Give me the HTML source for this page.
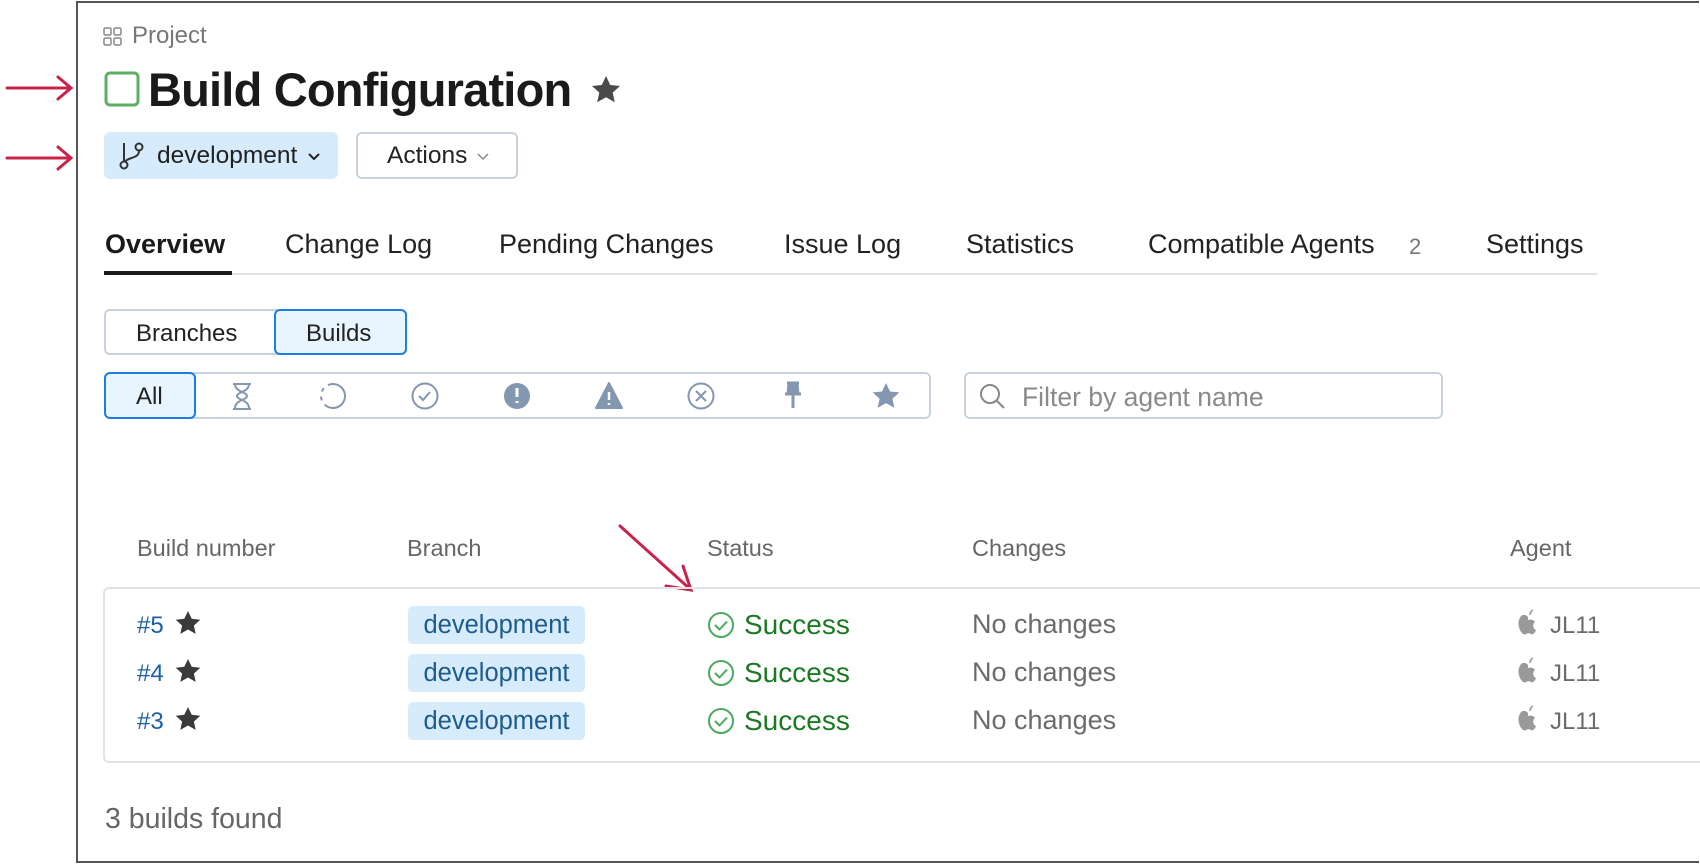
<!DOCTYPE html>
<html><head><meta charset="utf-8"><style>
*{margin:0;padding:0;box-sizing:border-box}
body{width:1700px;height:864px;background:#fff;font-family:"Liberation Sans",sans-serif;position:relative;overflow:hidden;color:#222}
.a{position:absolute;white-space:nowrap}
.frame{position:absolute;left:76px;top:1px;width:1623px;height:862px;border:2px solid #555;border-right:none}
.tab{position:absolute;top:229px;font-size:27px;color:#222}
.hd{position:absolute;top:535px;font-size:23.5px;color:#666}
.pill{position:absolute;left:408px;width:177px;height:38px;background:#d6ecfc;border-radius:5px;color:#1d5a8e;font-size:25.5px;text-align:center;line-height:38px}
.num{position:absolute;left:137px;font-size:24px;color:#1a5fa8}
.st{position:absolute;left:744px;font-size:28px;color:#1a7a23}
.nc{position:absolute;left:972px;font-size:27px;color:#6b6b6b}
.ag{position:absolute;left:1550px;font-size:24px;color:#6b6b6b}
</style></head><body>
<div class="frame"></div>
<svg style="position:absolute;left:0;top:0" width="1700" height="864">
<g stroke="#c8234a" stroke-width="3" fill="none" stroke-linecap="round">
<path d="M7 88H70M58 77L71 88L58 99"/>
<path d="M7 158H70M58 147L71 158L58 169"/>
<path d="M620 526L690 589M666 586L691 590L683 566"/>
</g>
<g fill="none" stroke="#888" stroke-width="1.5"><rect x="104" y="28" width="7" height="7" rx="1.5"/><rect x="114" y="28" width="7" height="7" rx="1.5"/><rect x="104" y="38" width="7" height="7" rx="1.5"/><rect x="114" y="38" width="7" height="7" rx="1.5"/></g>
<rect x="106" y="73" width="32" height="32" rx="4" fill="none" stroke="#5cae63" stroke-width="3"/>
<path d="M606 76l4.2 9 9.8 1-7.3 6.6 2.1 9.6-8.8-5-8.8 5 2.1-9.6-7.3-6.6 9.8-1z" fill="#4a4a4a"/>
</svg>
<div class="a" style="left:132px;top:22px;font-size:24px;color:#777">Project</div>
<div class="a" style="left:148px;top:62px;font-size:47px;font-weight:bold;color:#1a1a1a;letter-spacing:-0.8px">Build Configuration</div>
<div class="a" style="left:104px;top:132px;width:234px;height:47px;background:#d6ecfc;border-radius:6px"></div>
<svg class="a" style="left:118px;top:141px" width="30" height="30" viewBox="0 0 30 30" fill="none" stroke="#333" stroke-width="2"><circle cx="6" cy="24" r="3.5"/><circle cx="21" cy="6" r="3.5"/><path d="M6 20V2M21 10c0 8-12 6-14 11"/></svg>
<div class="a" style="left:157px;top:142px;font-size:24.5px;color:#222">development</div>
<svg class="a" style="left:307px;top:152px" width="14" height="10"><path d="M2 2l5 5 5-5" stroke="#222" stroke-width="2" fill="none"/></svg>
<div class="a" style="left:356px;top:132px;width:162px;height:47px;border:2px solid #c8d2de;border-radius:6px"></div>
<div class="a" style="left:387px;top:142px;font-size:24.5px;color:#222">Actions</div>
<svg class="a" style="left:476px;top:152px" width="14" height="10"><path d="M2 2l5 5 5-5" stroke="#888" stroke-width="1.5" fill="none"/></svg>
<div class="tab" style="left:105px;font-weight:bold;color:#1a1a1a">Overview</div>
<div class="tab" style="left:285px">Change Log</div>
<div class="tab" style="left:499px">Pending Changes</div>
<div class="tab" style="left:784px">Issue Log</div>
<div class="tab" style="left:966px">Statistics</div>
<div class="tab" style="left:1148px">Compatible Agents</div>
<div class="tab" style="left:1409px;font-size:22px;color:#777;top:234px">2</div>
<div class="tab" style="left:1486px">Settings</div>
<div class="a" style="left:104px;top:273px;width:1493px;height:2px;background:#dfe3e8"></div>
<div class="a" style="left:104px;top:271px;width:128px;height:4px;background:#1a1a1a"></div>
<div class="a" style="left:104px;top:309px;width:303px;height:46px;border:2px solid #c8d2de;border-radius:6px"></div>
<div class="a" style="left:136px;top:320px;font-size:24px;color:#222">Branches</div>
<div class="a" style="left:274px;top:309px;width:133px;height:46px;border:2px solid #1a7fe0;border-radius:6px;background:#e8f4fe"></div>
<div class="a" style="left:306px;top:320px;font-size:24px;color:#222">Builds</div>
<div class="a" style="left:104px;top:372px;width:827px;height:47px;border:2px solid #c8d2de;border-radius:6px"></div>
<div class="a" style="left:104px;top:372px;width:92px;height:47px;border:2px solid #1a7fe0;border-radius:6px;background:#e8f4fe"></div>
<div class="a" style="left:136px;top:383px;font-size:24px;color:#222">All</div>
<svg class="a" style="left:0;top:0" width="1000" height="440" fill="none" stroke="#8497b0" stroke-width="2">
<path d="M233 384h18M233 409h18M235 384c0 8 12 8 12 12s-12 4-12 12M249 384c0 8-12 8-12 12s12 4 12 12"/>
<circle cx="333" cy="396" r="12" stroke-dasharray="28 5 4 5 4 5"/>
<circle cx="425" cy="396" r="12.5"/><path d="M419 396l4 4 7-8"/>
<circle cx="517" cy="396" r="13" fill="#8497b0" stroke="none"/><path d="M517 388v9M517 401v2" stroke="#fff" stroke-width="3"/>
<path d="M609 383l13 25h-26z" fill="#8497b0" stroke-linejoin="round"/><path d="M609 392v8M609 403v2" stroke="#fff" stroke-width="2.5"/>
<circle cx="701" cy="396" r="12.5"/><path d="M696 391l10 10M706 391l-10 10"/>
<path d="M787 383h12M789 383l-1 11h10l-1-11M785 394h16M793 394v14" fill="#8497b0" stroke-width="3"/>
<path d="M886 383l4 8.5 9.4.9-7 6.3 2 9.2-8.4-4.8-8.4 4.8 2-9.2-7-6.3 9.4-.9z" fill="#8497b0" stroke="none"/>
</svg>
<div class="a" style="left:964px;top:372px;width:479px;height:47px;border:2px solid #c8d2de;border-radius:6px"></div>
<svg class="a" style="left:979px;top:383px" width="28" height="28" fill="none" stroke="#888" stroke-width="2"><circle cx="11" cy="11" r="9"/><path d="M18 18l7 7"/></svg>
<div class="a" style="left:1022px;top:382px;font-size:26.5px;color:#8a8a8a">Filter by agent name</div>
<div class="hd" style="left:137px">Build number</div>
<div class="hd" style="left:407px">Branch</div>
<div class="hd" style="left:707px">Status</div>
<div class="hd" style="left:972px">Changes</div>
<div class="hd" style="left:1510px">Agent</div>
<div class="a" style="left:103px;top:587px;width:1620px;height:176px;border:2px solid #dfe3e8;border-radius:6px"></div>
<div class="num" style="top:612px">#5</div><div class="num" style="top:660px">#4</div><div class="num" style="top:708px">#3</div>
<svg class="a" style="left:0;top:0" width="1700" height="864">
<g fill="#3a3a3a"><path id="s" d="M188 611l3.7 7.8 8.6.9-6.4 5.8 1.8 8.4-7.7-4.4-7.7 4.4 1.8-8.4-6.4-5.8 8.6-.9z"/>
<use href="#s" y="48"/><use href="#s" y="96"/></g>
<g fill="none" stroke="#4caa5a" stroke-width="2"><g id="c"><circle cx="721" cy="625" r="12"/><path d="M715 625l4.5 4.5 7.5-8"/></g><use href="#c" y="48"/><use href="#c" y="96"/></g>
<g fill="#999"><g id="ap"><path d="M1528 617c-2-3-7-3-8 1-3 4-1 12 2 15 1 1 2 2 4 1 2-1 3-1 5 0 2 1 4-1 5-4-3-1-4-6-1-8-1-2-4-3-7-2z"/><path d="M1530 615c0-2 1-4 3-5" stroke="#999" stroke-width="1.5"/></g><use href="#ap" y="48"/><use href="#ap" y="96"/></g>
</svg>
<div class="pill" style="top:606px">development</div><div class="pill" style="top:654px">development</div><div class="pill" style="top:702px">development</div>
<div class="st" style="top:609px">Success</div><div class="st" style="top:657px">Success</div><div class="st" style="top:705px">Success</div>
<div class="nc" style="top:609px">No changes</div><div class="nc" style="top:657px">No changes</div><div class="nc" style="top:705px">No changes</div>
<div class="ag" style="top:612px">JL11</div><div class="ag" style="top:660px">JL11</div><div class="ag" style="top:708px">JL11</div>
<div class="a" style="left:105px;top:803px;font-size:28.5px;color:#666">3 builds found</div>
</body></html>
